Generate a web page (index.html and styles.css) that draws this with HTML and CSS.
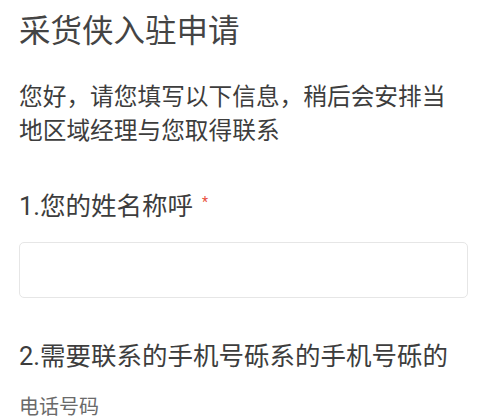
FILE: index.html
```html
<!DOCTYPE html>
<html lang="zh-CN">
<head>
<meta charset="utf-8">
<title>采货侠入驻申请</title>
<link rel="stylesheet" href="styles.css">
</head>
<body>
<main class="page">
  <h1 class="title">采货侠入驻申请</h1>
  <p class="intro">您好，请您填写以下信息，稍后会安排当地区域经理与您取得联系</p>
  <section class="field">
    <label class="label" for="name">1.您的姓名称呼<span class="req">*</span></label>
    <input class="input" id="name" type="text">
  </section>
  <section class="field field-phone">
    <div class="label">2.需要联系的手机号砾系的手机号砾的</div>
    <div class="sub">电话号码</div>
  </section>
</main>
</body>
</html>
```
FILE: styles.css
```css
html, body {
  margin: 0;
  padding: 0;
  background: #ffffff;
}
body {
  font-family: Roboto, "Noto Sans CJK SC", "Noto Sans", sans-serif;
  color: #3a3a3a;
  overflow: hidden;
}
.page {
  padding: 0 12px 0 19px;
}
.title {
  margin: 12px 0 0;
  font-size: 31.5px;
  line-height: 40px;
  font-weight: 400;
  color: #444444;
}
.intro {
  margin: 28px 0 0;
  padding-right: 14px;
  font-size: 23.7px;
  line-height: 34px;
  color: #3d3d3d;
}
.field {
  margin-top: 41px;
  display: flex;
  flex-direction: column;
}
.label {
  font-size: 25.5px;
  line-height: 34px;
  color: #3d3d3d;
  white-space: nowrap;
}
.req {
  color: #e94e3c;
  font-size: 14px;
  vertical-align: top;
  position: relative;
  top: -4px;
  margin-left: 9px;
}
.input {
  margin: 19px 0 0;
  height: 56px;
  box-sizing: border-box;
  border: 1.5px solid #e6e6e6;
  border-radius: 5px;
  background: #fff;
  outline: none;
  padding: 0 12px;
  font: inherit;
}
.field-phone {
  margin-top: 41px;
}
.sub {
  margin-top: 19px;
  font-size: 20px;
  line-height: 30px;
  color: #6a6a6a;
}
```
